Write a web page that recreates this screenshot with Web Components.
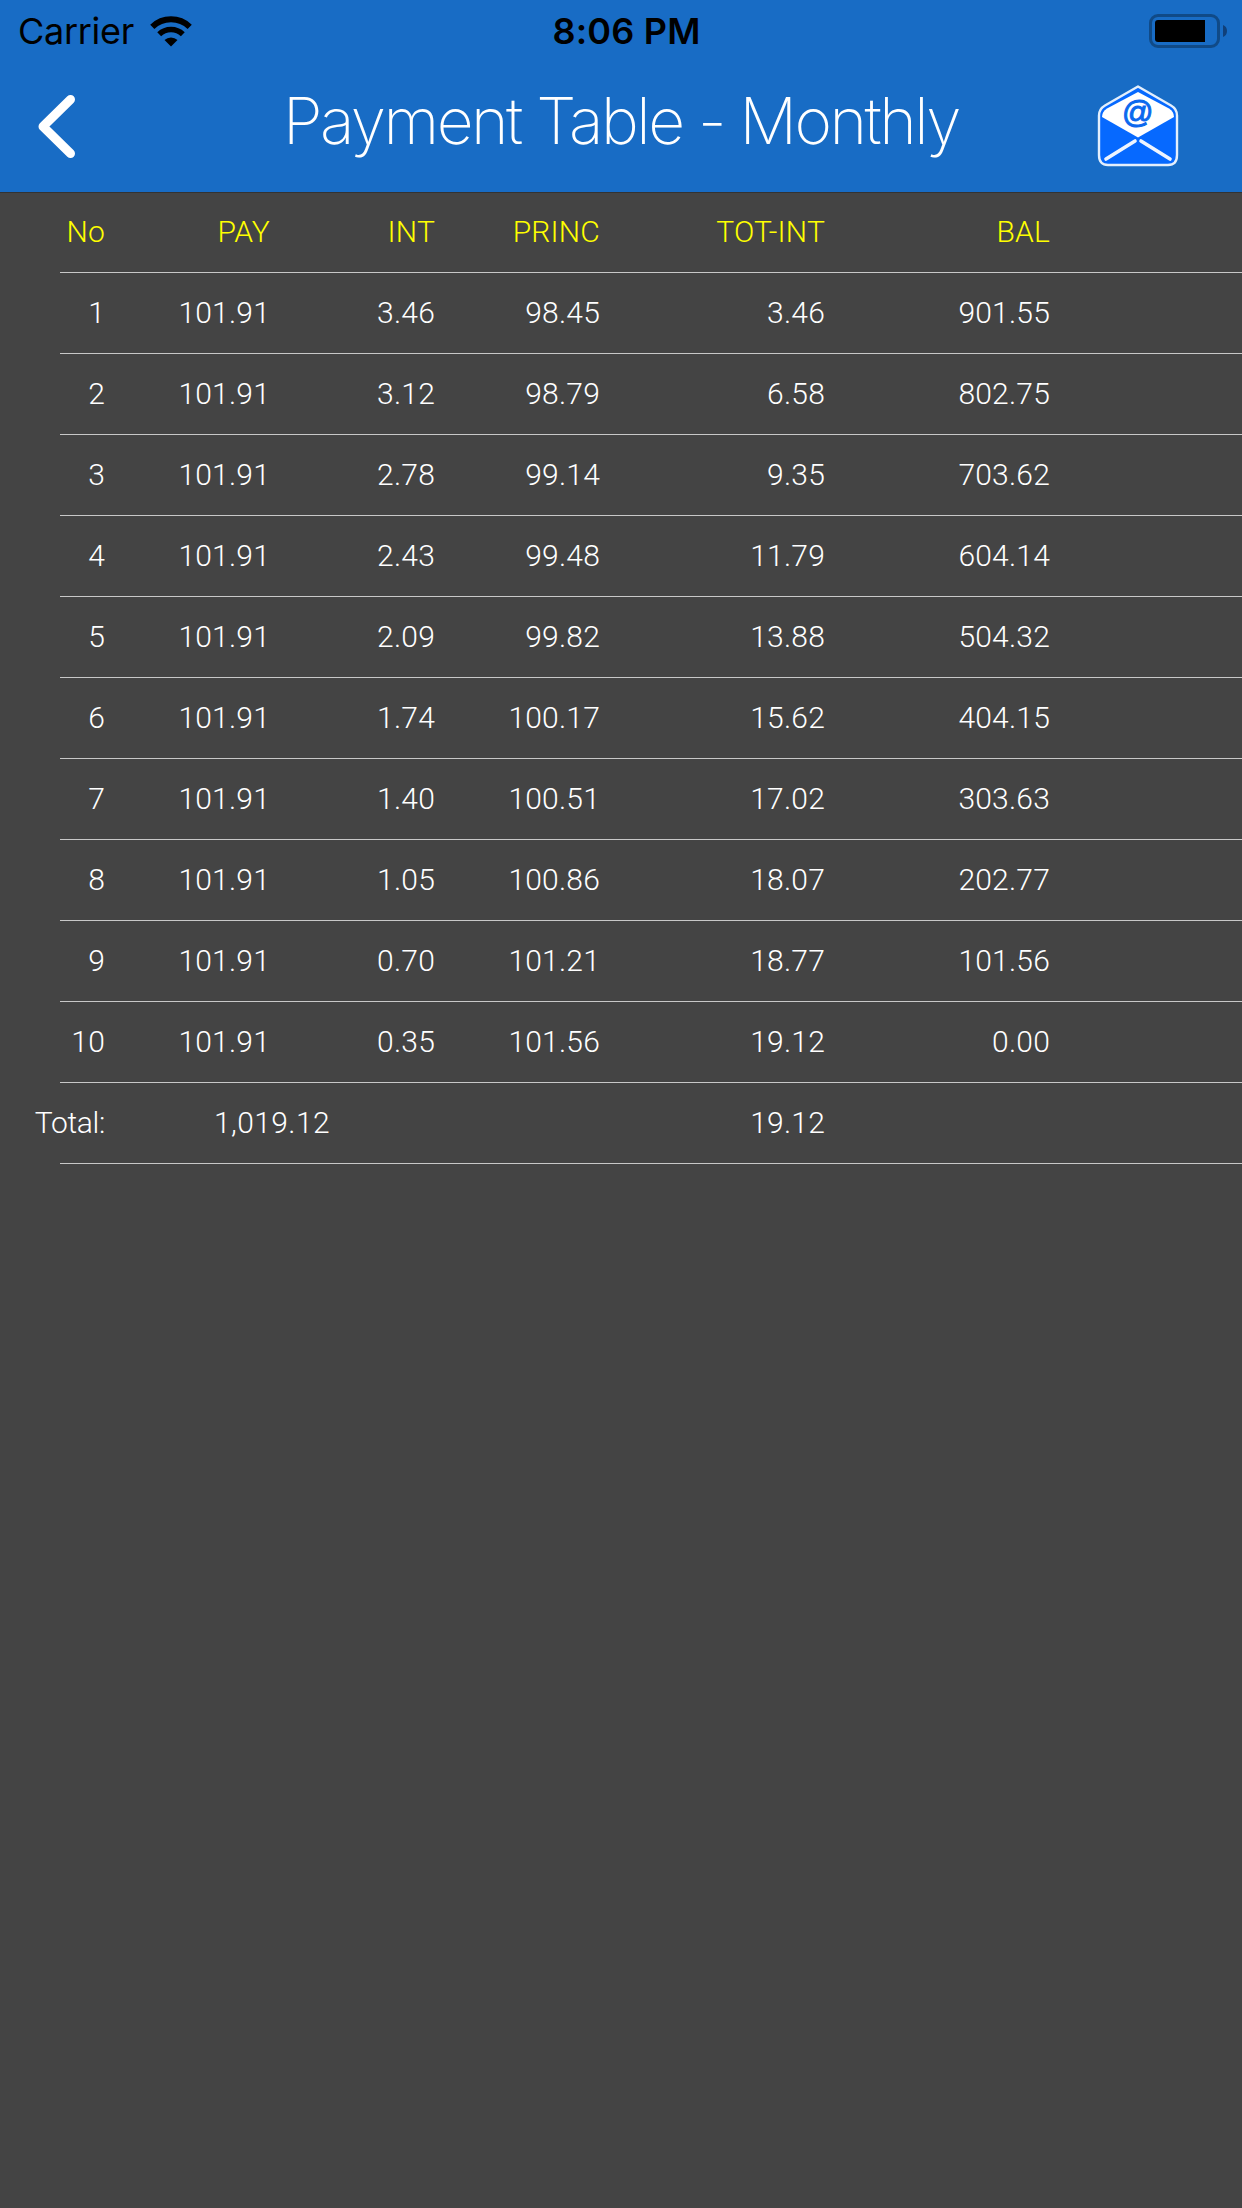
<!DOCTYPE html>
<html lang="en">
<head>
<meta charset="utf-8">
<title>Payment Table - Monthly</title>
<style>
  body {
    margin: 0;
    background: #444;
    font-family: Inter, "Liberation Sans", sans-serif;
  }
</style>
</head>
<body>
<payment-page></payment-page>

<script>
class StatusBar extends HTMLElement {
  constructor() {
    super();
    const template = document.createElement('template');
    template.innerHTML = `
      <style>
        :host {
          display: grid;
          grid-template-columns: 1fr auto 1fr;
          align-items: center;
          height: 60px;
          padding: 1px 14px 0 18px;
          box-sizing: border-box;
          color: #000;
          font-size: 36px;
          line-height: 60px;
        }
        .carrier { display: flex; align-items: center; gap: 16px; letter-spacing: -0.3px; }
        .time { padding-left: 7px; font-weight: 600; letter-spacing: 0.2px; }
        .battery { justify-self: end; }
        svg { display: block; }
      </style>
      <div class="carrier">
        <span><slot name="carrier"></slot></span>
        <svg width="42" height="31" viewBox="0 0 42 31" fill="none" stroke="#000">
          <path d="M2.300 10.800a27 27 0 0 1 37.400 0" stroke-width="6"/>
          <path d="M9.200 18.200a17 17 0 0 1 23.600 0" stroke-width="5.600"/>
          <path d="M14.500 24a9.500 9.500 0 0 1 13 0L21 30.500z" fill="#000" stroke="none"/>
        </svg>
      </div>
      <div class="time"><slot name="time"></slot></div>
      <svg class="battery" width="79" height="34" viewBox="0 0 79 34">
        <rect x="1.500" y="1.500" width="68" height="31" rx="7.500" fill="none" stroke="#104a87" stroke-width="3"/>
        <path d="M9 6h47v22H9q-3 0-3-3V9q0-3 3-3z"/>
        <path d="M74 11q4 1.500 4 6t-4 6z" fill="#10407a"/>
      </svg>
    `;
    this.attachShadow({ mode: 'open' });
    this.shadowRoot.appendChild(template.content.cloneNode(true));
  }
}

class NavBar extends HTMLElement {
  constructor() {
    super();
    const template = document.createElement('template');
    template.innerHTML = `
      <style>
        :host {
          display: grid;
          grid-template-columns: 152px 1fr 152px;
          height: 132px;
        }
        .back { margin: 33px 0 0 34px; }
        .mail { margin: 24px 0 0 6px; }
        h1 {
          margin: 0;
          padding-top: 16px;
          color: #fff;
          font-size: 64px;
          line-height: 90px;
          font-weight: 200;
          letter-spacing: -2.5px;
          text-align: center;
          white-space: nowrap;
        }
        svg { display: block; }
      </style>
      <svg class="back" width="46" height="68" viewBox="0 0 46 68">
        <path d="M36.500 6.500L9 33.500l27.500 27" fill="none" stroke="#fff" stroke-width="9" stroke-linecap="round" stroke-linejoin="round"/>
      </svg>
      <h1><slot></slot></h1>
      <svg class="mail" width="84" height="84" viewBox="0 0 84 84">
        <path d="M42 2.500L75 21.500q6 3.500 6 10V71q0 10-9 10H12q-9 0-9-10V31.500q0-6.500 6-10z" fill="#0669ff" stroke="#e4effc" stroke-width="2.400" stroke-linejoin="round"/>
        <path d="M42 8L73 24.500q5 3 5 8.500L42 53.500 6 33q0-5.500 5-8.500z" fill="#fff"/>
        <path d="M39 57L10 75M45 57l29 18" stroke="#eef5ff" stroke-width="3.600" stroke-linecap="round"/>
        <text x="41.800" y="38.500" text-anchor="middle" font-family="Liberation Sans, sans-serif" font-size="31" fill="#0b68ee" stroke="#0b68ee" stroke-width="1">@</text>
      </svg>
    `;
    this.attachShadow({ mode: 'open' });
    this.shadowRoot.appendChild(template.content.cloneNode(true));
  }
}

class PaymentRow extends HTMLElement {
  constructor() {
    super();
    const template = document.createElement('template');
    template.innerHTML = `
      <style>
        :host {
          display: grid;
          grid-template-columns: 105px 165px 165px 165px 225px 225px;
          height: 81px;
          box-sizing: border-box;
          color: #fff;
          font-family: Roboto, "Liberation Sans", sans-serif;
          font-size: 30px;
          font-weight: 300;
          line-height: 80px;
          letter-spacing: 0.2px;
          text-align: right;
          white-space: nowrap;
          background: linear-gradient(#c8c8c8, #c8c8c8) 60px 100% / 100% 1px no-repeat;
        }
        :host([head]) { color: #ff0; }
        :host([total]) span:nth-of-type(1) { letter-spacing: -0.3px; }
        :host([total]) span:nth-of-type(2) { margin-right: -60px; letter-spacing: 0.4px; }
      </style>
    `;
    this.attachShadow({ mode: 'open' });
    this.shadowRoot.appendChild(template.content.cloneNode(true));
  }

  set values(values) {
    values.forEach(value => {
      const cell = document.createElement('span');
      cell.textContent = value;
      this.shadowRoot.appendChild(cell);
    });
  }
}

class PaymentTable extends HTMLElement {
  constructor() {
    super();
    this.attachShadow({ mode: 'open' });
    this.shadowRoot.innerHTML = `
      <style>
        :host { display: block; }
      </style>
    `;
  }

  set rows(rows) {
    rows.forEach((values, i) => {
      const row = document.createElement('payment-row');
      if (i === 0) row.setAttribute('head', '');
      if (i === rows.length - 1) row.setAttribute('total', '');
      row.values = values;
      this.shadowRoot.appendChild(row);
    });
  }
}

class PaymentPage extends HTMLElement {
  constructor() {
    super();
    const template = document.createElement('template');
    template.innerHTML = `
      <style>
        :host {
          display: block;
          width: 1242px;
          height: 2208px;
          overflow: hidden;
          background: #444;
        }
        header {
          background: #186cc5;
          box-shadow: 0 1px #333;
        }
      </style>
      <header>
        <status-bar>
          <span slot="carrier">Carrier</span>
          <span slot="time">8:06 PM</span>
        </status-bar>
        <nav-bar>Payment Table - Monthly</nav-bar>
      </header>
      <payment-table></payment-table>
    `;
    this.attachShadow({ mode: 'open' });
    this.shadowRoot.appendChild(template.content.cloneNode(true));
    this.shadowRoot.querySelector('payment-table').rows = [
      ['No', 'PAY', 'INT', 'PRINC', 'TOT-INT', 'BAL'],
      ['1', '101.91', '3.46', '98.45', '3.46', '901.55'],
      ['2', '101.91', '3.12', '98.79', '6.58', '802.75'],
      ['3', '101.91', '2.78', '99.14', '9.35', '703.62'],
      ['4', '101.91', '2.43', '99.48', '11.79', '604.14'],
      ['5', '101.91', '2.09', '99.82', '13.88', '504.32'],
      ['6', '101.91', '1.74', '100.17', '15.62', '404.15'],
      ['7', '101.91', '1.40', '100.51', '17.02', '303.63'],
      ['8', '101.91', '1.05', '100.86', '18.07', '202.77'],
      ['9', '101.91', '0.70', '101.21', '18.77', '101.56'],
      ['10', '101.91', '0.35', '101.56', '19.12', '0.00'],
      ['Total:', '1,019.12', '', '', '19.12', ''],
    ];
  }
}

customElements.define('status-bar', StatusBar);
customElements.define('nav-bar', NavBar);
customElements.define('payment-row', PaymentRow);
customElements.define('payment-table', PaymentTable);
customElements.define('payment-page', PaymentPage);
</script>
</body>
</html>
